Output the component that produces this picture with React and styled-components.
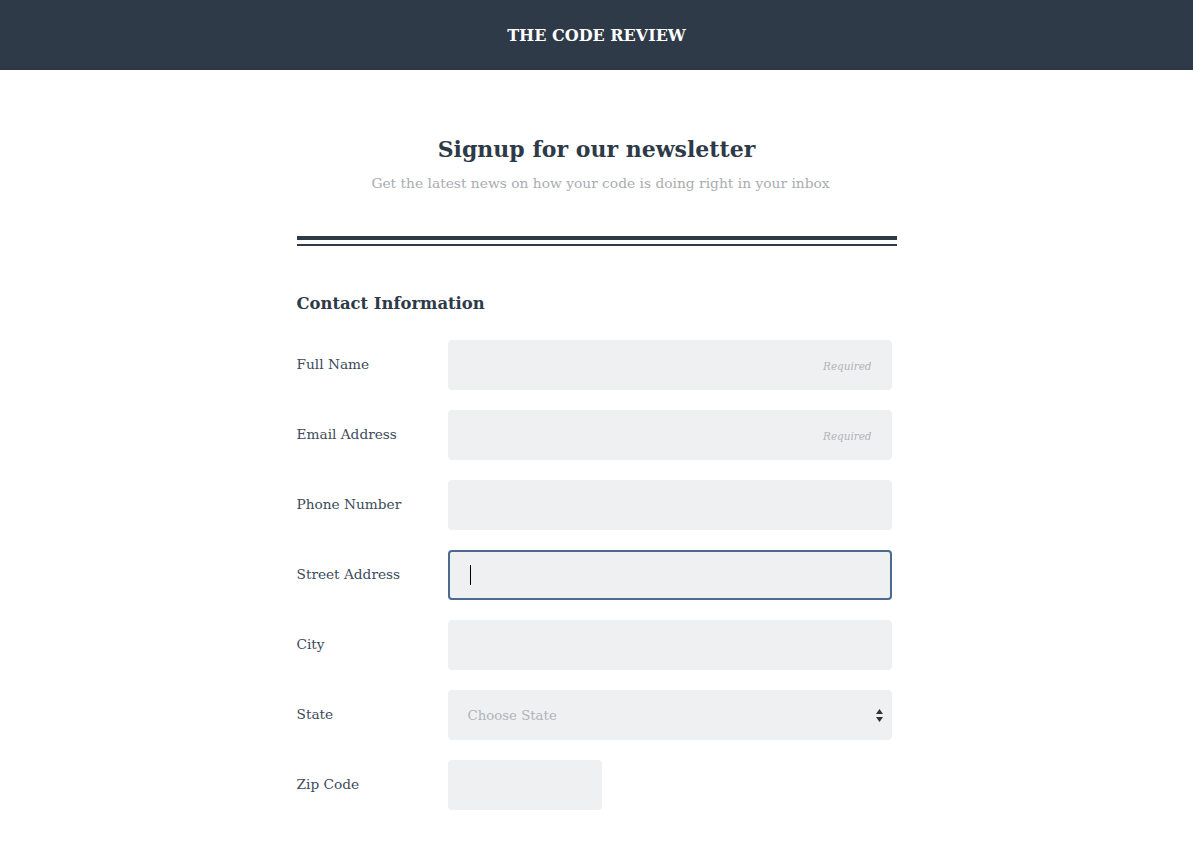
import React from "react";
import styled, { createGlobalStyle } from "styled-components";

const GlobalStyle = createGlobalStyle`
  html, body {
    margin: 0;
    padding: 0;
    background: #fff;
    font-family: "DejaVu Serif", "Liberation Serif", serif;
    color: #2e3a47;
  }
`;

const Header = styled.header`
  height: 70px;
  background-color: #2e3a47;
  display: flex;
  align-items: center;
  justify-content: center;
`;
const Brand = styled.h1`
  margin: 0;
  color: #fff;
  font-size: 16px;
  font-weight: bold;
`;
const Wrapper = styled.main`
  width: 600px;
  margin: 0 auto;
  padding-top: 64px;
`;
const Intro = styled.div`
  text-align: center;
`;
const Title = styled.h2`
  margin: 0;
  font-size: 22px;
  line-height: 30px;
  font-weight: bold;
`;
const Subtitle = styled.p`
  margin: 8px 0 0;
  padding-left: 8px;
  font-size: 13.8px;
  line-height: 22px;
  color: #a9acb0;
`;
const Rule = styled.div`
  margin-top: 42px;
  height: 4px;
  border-top: 4px solid #2e3a47;
  border-bottom: 2px solid #2e3a47;
`;
const Section = styled.h3`
  margin: 44px 0 0;
  font-size: 16.4px;
  line-height: 28px;
  font-weight: bold;
`;
const Form = styled.form`
  margin-top: 22px;
  display: flex;
  flex-direction: column;
  gap: 20px;
`;
const Row = styled.div`
  display: flex;
  align-items: center;
`;
const Label = styled.label`
  width: 151px;
  flex-shrink: 0;
  margin-top: -2px;
  font-size: 13.7px;
  color: #3d4b5c;
`;
const Field = styled.div`
  width: ${(p) => p.$width || "444px"};
  height: 50px;
  box-sizing: border-box;
  background: #eff0f2;
  border-radius: 4px;
  border: 2px solid ${(p) => (p.$focused ? "#4a6b8f" : "transparent")};
  display: flex;
  align-items: center;
  padding: 0 18px;
`;
const Input = styled.input`
  flex: 1;
  min-width: 0;
  border: 0;
  outline: 0;
  background: transparent;
  font-family: inherit;
  font-size: 13.7px;
  color: #2e3a47;
  padding: 0;
  &::placeholder {
    color: #b0b3b8;
    font-style: italic;
    font-size: 10.4px;
    text-align: right;
  }
`;
const Caret = styled.span`
  width: 1px;
  height: 20px;
  margin-left: 2px;
  background: #000;
`;
const SelectText = styled.span`
  flex: 1;
  font-size: 13.3px;
  color: #b0b3b8;
`;
const Arrows = styled.svg`
  width: 7px;
  height: 15px;
  margin-right: -11px;
`;

const fields = [
  { label: "Full Name", required: true },
  { label: "Email Address", required: true },
  { label: "Phone Number" },
  { label: "Street Address", focused: true },
  { label: "City" },
];

export default function App() {
  return (
    <>
      <GlobalStyle />
      <Header>
        <Brand>THE CODE REVIEW</Brand>
      </Header>
      <Wrapper>
        <Intro>
          <Title>Signup for our newsletter</Title>
          <Subtitle>Get the latest news on how your code is doing right in your inbox</Subtitle>
        </Intro>
        <Rule />
        <Section>Contact Information</Section>
        <Form>
          {fields.map((f) => (
            <Row key={f.label}>
              <Label>{f.label}</Label>
              <Field $focused={f.focused}>
                {f.focused ? (
                  <Caret />
                ) : (
                  <Input placeholder={f.required ? "Required" : ""} />
                )}
              </Field>
            </Row>
          ))}
          <Row>
            <Label>State</Label>
            <Field>
              <SelectText>Choose State</SelectText>
              <Arrows viewBox="0 0 7 15">
                <path d="M3.5 1 L7 6 H0 Z M0 9 H7 L3.5 14 Z" fill="#333" />
              </Arrows>
            </Field>
          </Row>
          <Row>
            <Label>Zip Code</Label>
            <Field $width="154px">
              <Input />
            </Field>
          </Row>
        </Form>
      </Wrapper>
    </>
  );
}
